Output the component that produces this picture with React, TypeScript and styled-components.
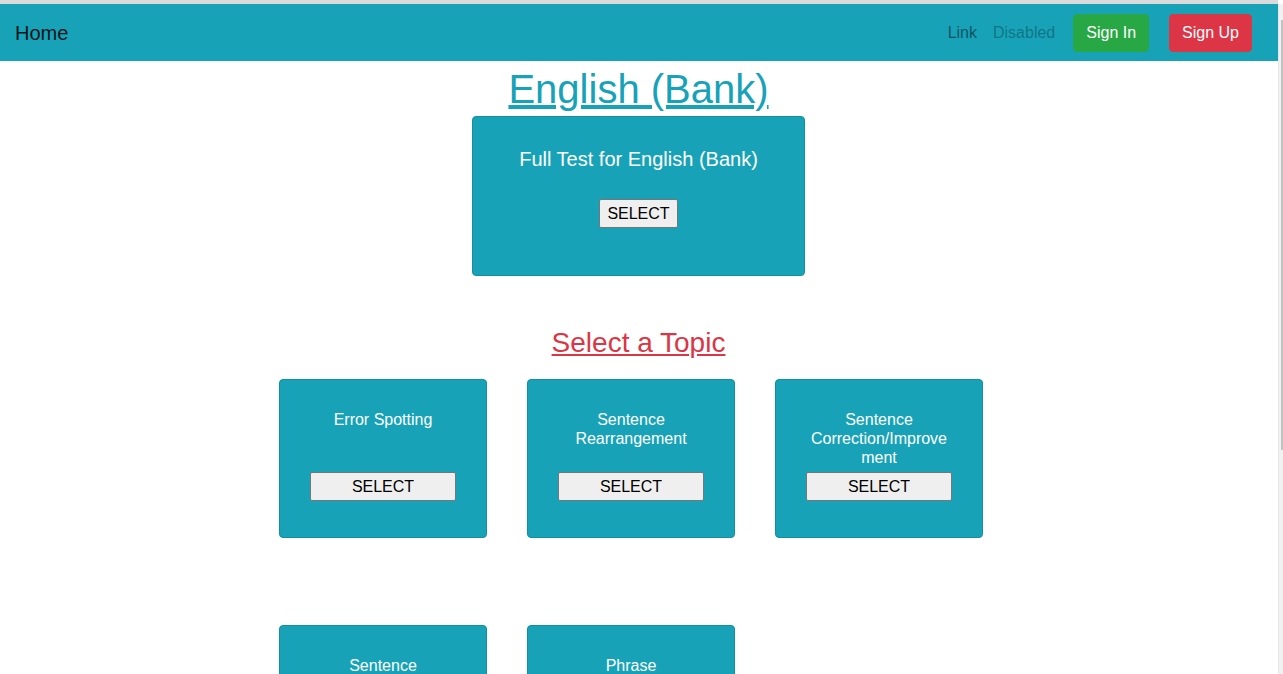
import React from 'react'
import styled, { createGlobalStyle } from 'styled-components'

const TOPICS = [
  'Error Spotting',
  'Sentence Rearrangement',
  'Sentence Correction/Improvement',
  'Sentence Completion',
  'Phrase Replacement',
]

const GlobalStyle = createGlobalStyle`
  body {
    margin: 0;
    font-family: "Liberation Sans", Arial, sans-serif;
    background: #fff;
  }
`

export const App = () => {
  return (
    <Root>
      <GlobalStyle />
      <Navbar>
        <Brand href="#">Home</Brand>
        <NavRight>
          <NavLink href="#">Link</NavLink>
          <NavLink href="#" $disabled>
            Disabled
          </NavLink>
          <NavButton $color="#28a745">Sign In</NavButton>
          <NavButton $color="#dc3545">Sign Up</NavButton>
        </NavRight>
      </Navbar>
      <Main>
        <Title href="#">English (Bank)</Title>
        <FullCard>
          <FullCardTitle>Full Test for English (Bank)</FullCardTitle>
          <SelectButton>SELECT</SelectButton>
        </FullCard>
        <TopicHeading href="#">Select a Topic</TopicHeading>
        <TopicGrid>
          {TOPICS.map((topic) => (
            <TopicCard key={topic}>
              <TopicName>{topic}</TopicName>
              <SelectButton $wide>SELECT</SelectButton>
            </TopicCard>
          ))}
        </TopicGrid>
      </Main>
      <ScrollTrack>
        <ScrollThumb />
      </ScrollTrack>
    </Root>
  )
}

export default App

const Root = styled.div`
  width: calc(100% - 5px);
  border-top: 4px solid #dadada;
  min-height: 900px;
`

// window scrollbar as it shows in the capture
const ScrollTrack = styled.div`
  position: fixed;
  top: 4px;
  right: 0;
  bottom: 0;
  width: 5px;
  background: #f1f1f1;
  border-left: 1px solid #e6e6e6;
  box-sizing: border-box;
`

const ScrollThumb = styled.div`
  margin: 16px 0 0 2px;
  height: 430px;
  background: #c1c1c1;
`

const Navbar = styled.nav`
  display: flex;
  align-items: center;
  justify-content: space-between;
  height: 57px;
  box-sizing: border-box;
  padding: 8px 16px 8px 15px;
  background-color: #17a2b8;
`

const Brand = styled.a`
  font-size: 20px;
  line-height: 30px;
  color: rgba(0, 0, 0, 0.9);
  text-decoration: none;
`

const NavRight = styled.div`
  display: flex;
  align-items: center;
`

const NavLink = styled.a<{ $disabled?: boolean }>`
  padding: 8px;
  font-size: 16px;
  line-height: 24px;
  color: ${(p) => (p.$disabled ? 'rgba(0, 0, 0, 0.3)' : 'rgba(0, 0, 0, 0.5)')};
  text-decoration: none;
`

const NavButton = styled.button<{ $color: string }>`
  margin: 0 10px;
  padding: 6px 12px;
  font-family: inherit;
  font-size: 16px;
  line-height: 24px;
  color: #fff;
  background-color: ${(p) => p.$color};
  border: 1px solid ${(p) => p.$color};
  border-radius: 4px;
`

const Main = styled.main`
  display: flex;
  flex-direction: column;
  align-items: center;
  padding-right: 1px;
`

const Title = styled.a`
  margin: 4px 0 3px;
  font-size: 40px;
  line-height: 48px;
  color: #17a2b8;
`

const FullCard = styled.div`
  width: 333px;
  box-sizing: border-box;
  padding: 30px 20px 47px;
  display: flex;
  flex-direction: column;
  align-items: center;
  background-color: #17a2b8;
  border: 1px solid #138ea2;
  border-radius: 4px;
`

const FullCardTitle = styled.div`
  margin-bottom: 28px;
  font-size: 20px;
  line-height: 24px;
  color: #fff;
`

const SelectButton = styled.button<{ $wide?: boolean }>`
  width: ${(p) => (p.$wide ? '100%' : 'auto')};
  height: 29px;
  padding: 4px 7px;
  font-family: "Liberation Sans", Arial, sans-serif;
  font-size: 16px;
  color: #000;
  background-color: #efefef;
  border: 1px solid #767676;
  border-radius: 2px;
`

const TopicHeading = styled.a`
  margin: 50px 0 19px;
  font-size: 28px;
  line-height: 34px;
  color: #dc3545;
`

const TopicGrid = styled.div`
  display: grid;
  grid-template-columns: repeat(3, 208px);
  column-gap: 40px;
  row-gap: 87px;
  padding-right: 15px;
`

const TopicCard = styled.div`
  height: 159px;
  box-sizing: border-box;
  padding: 30px;
  display: flex;
  flex-direction: column;
  background-color: #17a2b8;
  border: 1px solid #138ea2;
  border-radius: 4px;
`

const TopicName = styled.div`
  min-height: 57px;
  margin-bottom: 5px;
  font-size: 16px;
  line-height: 19px;
  text-align: center;
  color: #fff;
  overflow-wrap: break-word;
`
